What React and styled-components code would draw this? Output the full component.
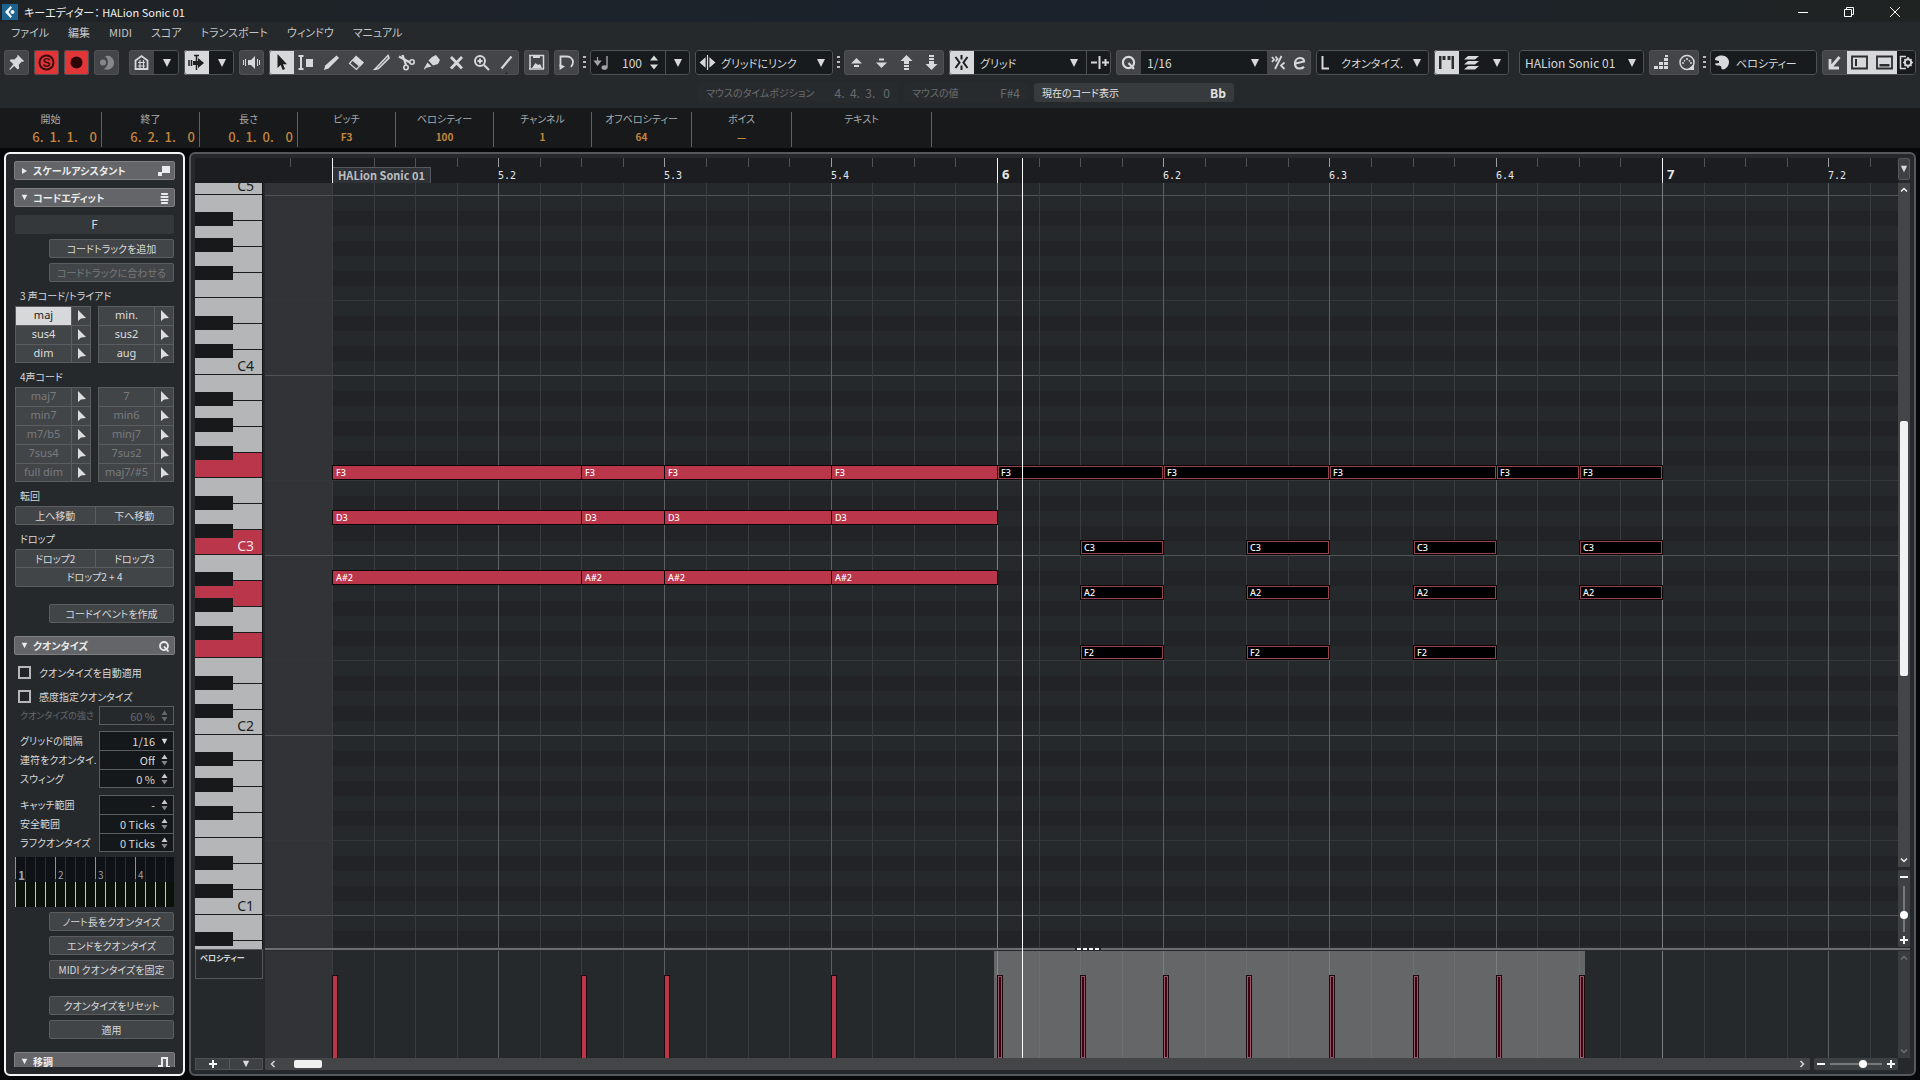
import React from 'react';
import styled, { createGlobalStyle, css } from 'styled-components';

const GlobalStyle = createGlobalStyle`
  * {
    box-sizing: border-box;
  }

  body {
    margin: 0;
    background: #060809;
    overflow: hidden;
  }

  body, button, input, select {
    font-family: 'Noto Sans CJK JP', 'Noto Sans', sans-serif;
    font-size: 12px;
    line-height: 16px;
    font-feature-settings: 'palt';
    color: #d6d8d9;
  }

  button, input, select {
    margin: 0;
    padding: 0;
    border: 0;
    border-radius: 0;
    background: none;
    appearance: none;
    outline: none;
  }

  svg {
    display: block;
    flex: none;
  }
`;

/* ---------- drawing helpers ---------- */

const icons = {
  pin: (
    <path
      fill="currentColor"
      d="M14 5l6 6-1 1-1.2-.4-3 3.2.4 3.4-1.4 1.4-3.7-3.7L6 20l-.8-.8 4.1-4.9-3.7-3.7L7 9.200l3.400.4 3.200-3L13 5.800z"
    />
  ),
  solo: (
    <>
      <circle cx="12.500" cy="12.500" r="7" fill="none" stroke="#3a0c0c" strokeWidth="2" />
      <text x="12.500" y="17" textAnchor="middle" fontFamily="Liberation Sans" fontSize="12" fontWeight="bold" fill="#3a0c0c">
        S
      </text>
    </>
  ),
  record: <circle cx="12.500" cy="12.500" r="6" fill="#2c0606" />,
  moon: (
    <>
      <path d="M11 6a7 7 0 1 1-1 13 8 8 0 0 0 1-13z" fill="#85878a" />
      <circle cx="9" cy="12.500" r="3" fill="#85878a" />
    </>
  ),
  house: (
    <>
      <path d="M6.500 19v-8.500L12.500 6l6 4.500V19z" fill="none" stroke="currentColor" strokeWidth="1.800" />
      <path d="M9 12.500h7M9 16h7M11 10v8M14.500 10v8" stroke="currentColor" strokeWidth="1.200" />
    </>
  ),
  scroll: (
    <>
      <path d="M12.500 5v15M10 5.500h5M5 10v6M7.500 10v6" stroke="#1c1e20" strokeWidth="1.500" />
      <path d="M9 11h5V8l6 5-6 5v-3H9z" fill="#1c1e20" />
    </>
  ),
  speaker: (
    <>
      <path d="M9 10h3l4-4v13l-4-4H9z" fill="currentColor" />
      <path d="M4.500 10v5M6.500 9v7M18.500 9v7M20.500 10v5" stroke="currentColor" />
    </>
  ),
  arrow: <path d="M8.500 4v14l3.200-3 2 5 2.300-1-2-4.800h4z" fill="#1c1e20" />,
  range: (
    <>
      <path d="M4.500 6h5M7 6v13M4.500 19h5" stroke="currentColor" strokeWidth="2" fill="none" />
      <path d="M12 9h7v8h-7z" fill="currentColor" />
    </>
  ),
  pencil: <path d="M17.500 5.500l2.500 2.500L9.500 18.500 5 20l1.200-4.500z" fill="currentColor" />,
  eraser: (
    <>
      <path d="M12 5.500l8 7-3.500 4-8-7z" fill="currentColor" />
      <path d="M8.500 10l7 6-3 3.500-7-6z" fill="none" stroke="currentColor" strokeWidth="1.200" />
    </>
  ),
  trim: <path d="M19 5.500L8.500 16.500 6 19l3.500-.5L20 8zM6 19.500l3-1" fill="none" stroke="currentColor" strokeWidth="1.600" />,
  scissors: (
    <>
      <path d="M5 6.500l11 6M8.500 5l3.500 10" stroke="currentColor" strokeWidth="2.200" />
      <circle cx="18" cy="12" r="2.200" fill="none" stroke="currentColor" strokeWidth="1.600" />
      <circle cx="12" cy="17.500" r="2.200" fill="none" stroke="currentColor" strokeWidth="1.600" />
    </>
  ),
  glue: (
    <>
      <path d="M13 7l4-2 4 5-2 4-5 1.500-4.500-5z" fill="currentColor" />
      <path d="M8.500 12.500l4 4-6 1.500-.5 2-1-1.500z" fill="currentColor" />
    </>
  ),
  cross: <path d="M7 7l11 11.500M18 7L7 18.500" stroke="currentColor" strokeWidth="2.800" />,
  zoom: (
    <>
      <circle cx="11" cy="11" r="5" fill="none" stroke="currentColor" strokeWidth="2" />
      <path d="M8.500 11h5M11 8.500v5M15 15l5 5" stroke="currentColor" strokeWidth="2" />
    </>
  ),
  line: (
    <>
      <path d="M17.500 6.500L7.500 18.500" stroke="currentColor" strokeWidth="2.200" />
      <path d="M10 25l2.500-3 2.500 3z" fill="#25292c" />
    </>
  ),
  feedback: (
    <>
      <path d="M5 5.500h15M6 5v14M19.500 5v14M5 19h15" stroke="currentColor" strokeWidth="1.500" />
      <path d="M9 6v2h7V6M8 18l3.500-5 2.500 2 2-1 2 4z" fill="currentColor" />
    </>
  ),
  loop: (
    <>
      <path
        d="M6.500 17V6.500H13a6 5.500 0 0 1 6 5.500c0 2-.8 3.500-2 5"
        fill="none"
        stroke="currentColor"
        strokeWidth="1.800"
      />
      <path d="M5.600 20v-6l5.400 2.500z" fill="currentColor" />
    </>
  ),
  velocity: (
    <>
      <path d="M7.500 7v8M4.500 11l3 4 3-4z" stroke="#a2a4a5" fill="#a2a4a5" strokeWidth="1.200" />
      <path d="M17 6v11" stroke="#a2a4a5" strokeWidth="1.400" />
      <ellipse cx="14.500" cy="17.500" rx="3" ry="2.300" fill="#a2a4a5" />
    </>
  ),
  spin: <path d="M1 10.500l4-5 4 5zM1 14.500l4 5 4-5z" fill="currentColor" />,
  nudge: <path d="M12.500 5v15M5.500 12.500L10 8.500v8zM19.500 12.500L15 8.500v8z" stroke="currentColor" fill="currentColor" strokeWidth="1.200" />,
  up: <path d="M7 13.500l5.500-5.500 5.500 5.500zM10 15h5v2h-5z" fill="currentColor" />,
  down: <path d="M7 12.500l5.500 5.500 5.500-5.500zM10 8.500h5v2h-5z" fill="currentColor" />,
  upOctave: <path d="M6.500 11l6-6 6 6H15v3h-5v-3zM10 15h5v2h-5zM10 18h5v2h-5z" fill="currentColor" />,
  downOctave: <path d="M6.500 14l6 6 6-6H15v-3h-5v3zM10 8h5v2h-5zM10 5h5v2h-5z" fill="currentColor" />,
  snap: (
    <>
      <path d="M12.500 5v4.500M12.500 15.500V20" stroke="#1c1e20" strokeWidth="2" />
      <path d="M6.500 7l4 5.500-4 5.500M18.500 7l-4 5.500 4 5.500" fill="none" stroke="#1c1e20" strokeWidth="2" />
    </>
  ),
  snapType: <path d="M4 12.500h6M12.500 6v13M15 12.500h7M18.500 9v7" stroke="currentColor" strokeWidth="2" />,
  quantize: (
    <>
      <circle cx="12.500" cy="12.500" r="5.600" fill="none" stroke="currentColor" strokeWidth="2.200" />
      <path d="M12.500 13l5.500 6" stroke="currentColor" strokeWidth="2.200" />
    </>
  ),
  iterative: (
    <path
      d="M14.500 6L8 19M5 7l2 2.500L5 12M8.500 6.500l2 2.500-2 2.500M17.500 12.500L14 15.500l3.500 3.500"
      fill="none"
      stroke="currentColor"
      strokeWidth="1.800"
    />
  ),
  editE: (
    <path
      d="M6.500 13.500L15 11.500c0-2-1.500-3.500-4-3.500s-5 2-5 5.500 2 5 4.500 5c2 0 3.500-.6 4.500-1.800"
      fill="none"
      stroke="currentColor"
      strokeWidth="2.200"
    />
  ),
  lengthL: <path d="M6.500 6v12.500H13" fill="none" stroke="currentColor" strokeWidth="2" />,
  parts: <path d="M5 6h2.500v13H5zM8.500 6h3v4h-3zM17.500 6H20v13h-2.500zM13.500 6h3v4h-3z" fill="#2a2c2e" />,
  layers: (
    <path
      d="M9 6h11l-4 3.500H5zM9 11h11l-4 3.500H5zM9 16h11l-4 3.500H5z"
      fill="currentColor"
    />
  ),
  steps: (
    <path
      d="M5 16h4v3H5zM10 16h4v3h-4zM15 16h4v3h-4zM10 12h4v3h-4zM15 12h4v3h-4zM15 8h4v3h-4zM16 5h3v2h-3z"
      fill="currentColor"
    />
  ),
  midi: (
    <>
      <circle cx="13" cy="12.500" r="7" fill="none" stroke="currentColor" strokeWidth="1.500" />
      <path
        d="M9 14v-2M10 10.500l1.200.6M13 8v2M16 10.500l-1.200.6M17 14v-2"
        stroke="currentColor"
        strokeWidth="1.500"
      />
      <path d="M13 20l7-6v6z" fill="currentColor" />
    </>
  ),
  palette: (
    <path
      d="M5 10c0-3 3-4.500 7-4.500s7 3 7 6.500-3 7.500-6 7.500c-2.500 0-1-3-2.500-3.500S5 16 5 13.500l4-.5v-2z"
      fill="currentColor"
    />
  ),
  corner: <path d="M17.500 7L9 17M8 9v9h9" fill="none" stroke="currentColor" strokeWidth="2.800" />,
  leftZone: (
    <>
      <path d="M5 6.500h15v12H5z" fill="none" stroke="#2a2c2e" strokeWidth="1.800" />
      <path d="M8 9h2v7H8z" fill="#2a2c2e" />
    </>
  ),
  lowerZone: (
    <>
      <path d="M5 6.500h15v12H5z" fill="none" stroke="#2a2c2e" strokeWidth="1.800" />
      <path d="M7.500 14h10v2.500h-10z" fill="#2a2c2e" />
    </>
  ),
  setup: (
    <>
      <path d="M9 6.500H3.500v12H9" fill="none" stroke="currentColor" strokeWidth="1.500" />
      <circle cx="11" cy="12.500" r="3.200" fill="none" stroke="currentColor" strokeWidth="2" />
      <path d="M11 7v2M11 16v2M6 12.500h2M14 12.500h2M7.500 9l1 1M14.500 9l-1 1M7.500 16l1-1M14.500 16l-1-1" stroke="currentColor" strokeWidth="1.500" />
    </>
  ),
};

const Icon = ({ name, width = 25, height = 25 }) => (
  <svg width={width} height={height} viewBox={`0 0 ${width} ${height}`} aria-hidden="true">
    {icons[name]}
  </svg>
);

const Caret = styled.svg.attrs({
  viewBox: '0 0 10 10',
  children: <path d="M1 1h8L5 9z" fill="currentColor" />,
})`
  width: ${(p) => p.$size || 9}px;
  height: ${(p) => p.$size || 9}px;
  pointer-events: none;
`;

/* ---------- window head ---------- */

const Window = styled.main`
  height: 100vh;
  display: flex;
  flex-direction: column;
`;

const TitleBar = styled.header`
  height: 22px;
  display: flex;
  align-items: center;
  padding: 2px 2px 0;
  gap: 6px;
  background: linear-gradient(90deg, #1f2326, #1b222b 45%, #1b222b 65%, #1f2322);
  color: #f0f1f1;

  h1 {
    flex: 1;
    margin: 0;
    font-size: 11px;
    font-weight: 400;
    white-space: pre;
  }
`;

const WindowButton = styled.button`
  width: 46px;
  height: 20px;
  margin-right: -6px;
  display: flex;
  align-items: center;
  justify-content: center;
  color: #fff;

  &:last-child {
    margin-right: 0;
  }
`;

const Head = styled.div`
  background: #25292c;
`;

const Menu = styled.nav`
  display: flex;
  gap: 19px;
  height: 22px;
  padding-left: 11px;

  button {
    height: 20px;
    font-size: 11px;
    color: #c3c5c6;
    white-space: nowrap;
  }
`;

const Toolbar = styled.div`
  display: flex;
  gap: 5px;
  padding: 6px 4px 8px;
`;

const Group = styled.div`
  display: flex;
  position: relative;
  height: 25px;
  flex: ${(p) => (p.$grow ? '1 1 0' : 'none')};
  ${(p) => p.$width && css`width: ${p.$width}px;`}
  margin-left: ${(p) => p.$space || 0}px;
  background: #181b1d;
  border-radius: 3px;
  overflow: hidden;

  &::after {
    content: '';
    position: absolute;
    inset: 0;
    border: 1px solid #4f5254;
    border-radius: 3px;
    pointer-events: none;
  }
`;

const tones = {
  raised: ['#434548', '#d6d8d9'],
  dark: ['transparent', '#d6d8d9'],
  lit: ['#d7d8d9', '#1c1e20'],
  red: ['#e23538', '#2c0606'],
};

const ToolButton = styled.button`
  width: ${(p) => p.$width || 25}px;
  height: 25px;
  flex: none;
  display: flex;
  align-items: center;
  justify-content: center;
  background: ${(p) => tones[p.$tone || 'raised'][0]};
  color: ${(p) => tones[p.$tone || 'raised'][1]};
  ${(p) => p.$divided && css`border-left: 1px solid #4f5254;`}
`;

const Grip = styled.span`
  width: 3px;
  height: 13px;
  margin: 6px -1px;
  background: repeating-linear-gradient(#b8babb 0 2px, transparent 2px 5px);
`;

const Picker = styled.label`
  flex: 1;
  min-width: 0;
  display: flex;
  align-items: center;
  padding-right: ${(p) => (p.$bare ? 0 : 7)}px;

  select {
    flex: 1;
    min-width: 0;
    height: 25px;
    padding-left: ${(p) => p.$indent || 6}px;
    font-size: ${(p) => (p.$latin ? 12 : 11)}px;
    white-space: nowrap;
  }
`;

const NumberInput = styled.input`
  flex: 1;
  width: 0;
  text-align: right;
  padding-right: 7px;
`;

const SpinButton = styled.button`
  width: 16px;
  flex: none;
`;

const StatusRow = styled.div`
  display: flex;
  gap: 6px;
  padding: 0 0 6px 698px;
`;

const Status = styled.div`
  width: ${(p) => p.$width}px;
  height: 19px;
  display: flex;
  justify-content: space-between;
  align-items: center;
  padding: 0 8px;
  border-radius: 3px;
  white-space: pre;
  font-size: 10px;
  background: ${(p) => (p.$active ? '#383b3e' : '#282b2e')};
  color: ${(p) => (p.$active ? '#e2e3e4' : '#696c6e')};

  b {
    font-size: 12px;
    font-weight: ${(p) => (p.$active ? 700 : 400)};
  }
`;

const InfoLine = styled.dl`
  height: 40px;
  margin: 0;
  display: flex;
  background: #17191a;
`;

const InfoCell = styled.div`
  width: ${(p) => p.$width}px;
  height: 35px;
  margin-top: 4px;
  border-right: 1px solid #5f6264;
  text-align: center;

  dt {
    font-size: 10px;
    line-height: 14px;
    color: #a9abac;
  }

  dd {
    margin: 3px 0 0;
    padding-right: ${(p) => (p.$time ? 4 : 0)}px;
    text-align: ${(p) => (p.$time ? 'right' : 'center')};
    white-space: pre;
    font-size: ${(p) => (p.$time ? 13 : 10)}px;
    font-weight: ${(p) => (p.$time ? 500 : 700)};
    color: #c5853a;
  }
`;

/* ---------- inspector ---------- */

const Body = styled.div`
  flex: 1;
  min-height: 0;
  display: flex;
  gap: 4px;
  padding: 4px;
`;

const Inspector = styled.aside`
  width: 181px;
  flex: none;
  display: flex;
  flex-direction: column;
  border: 2px solid #f4f5f5;
  border-radius: 6px;
  padding: 7px 8px;
  background: #25292c;
`;

const InspectorScroll = styled.div`
  flex: 1;
  min-height: 0;
  overflow: hidden;
`;

const SectionHead = styled.button`
  width: 100%;
  height: 19px;
  margin-bottom: 8px;
  display: flex;
  align-items: center;
  gap: 5px;
  padding: 0 4px 0 6px;
  border: 1px solid #7d7f81;
  border-radius: 2px;
  background: #636568;
  color: #eaebeb;
  font-size: 10px;
  font-weight: 700;
  text-align: left;

  span {
    flex: 1;
  }
`;

const Stack = styled.div`
  display: flex;
  flex-direction: column;
  align-items: ${(p) => (p.$end ? 'flex-end' : 'stretch')};
  gap: 5px;
  padding: 0 1px;
  margin-top: ${(p) => p.$before || 0}px;
  margin-bottom: ${(p) => p.$after || 0}px;
`;

const Readout = styled.output`
  height: 19px;
  border-radius: 2px;
  background: #35383b;
  text-align: center;
  line-height: 18px;
`;

const PanelButton = styled.button`
  width: 125px;
  height: 19px;
  border: 1px solid #5b5e60;
  border-radius: 2px;
  background: #424548;
  font-size: 10px;
  line-height: 16px;
  white-space: nowrap;

  &:disabled {
    color: #77797b;
  }
`;

const Caption = styled.h3`
  margin: 0;
  padding: ${(p) => p.$top || 4}px 0 2px 6px;
  font-size: 10px;
  line-height: 16px;
  font-weight: 400;
`;

const ChordGrid = styled.div`
  display: grid;
  grid-template-columns: 1fr 1fr;
  column-gap: 7px;
  padding: 0 1px;
`;

const Chord = styled.div`
  display: flex;
  height: 19px;
  border: 1px solid #5b5e60;
  border-bottom-width: ${(p) => (p.$last ? 1 : 0)}px;
  background: #424548;

  button:first-child {
    flex: 1;
    padding-bottom: 2px;
    border-right: 1px solid #5b5e60;
    font-family: 'Noto Sans', sans-serif;
    font-size: 11px;
    background: ${(p) => (p.$on ? '#d7d8d9' : 'transparent')};
    color: ${(p) => (p.$on ? '#232527' : p.$off ? '#797b7d' : '#dcdddd')};
  }

  button:last-child {
    width: 18px;
    display: flex;
    align-items: center;
    justify-content: center;
  }
`;

const ButtonGrid = styled.div`
  display: grid;
  grid-template-columns: 1fr 1fr;
  margin: 0 1px;
  border: 1px solid #5b5e60;
  border-radius: 2px;
  background: #424548;

  button {
    height: 17px;
    font-size: 10px;
    line-height: 16px;
  }

  button:nth-child(2) {
    border-left: 1px solid #5b5e60;
  }

  button:nth-child(3) {
    grid-column: 1 / 3;
    height: 19px;
    border-top: 1px solid #5b5e60;
  }
`;

const Tick = styled.label`
  display: flex;
  align-items: center;
  gap: 8px;
  height: 19px;
  padding-left: 4px;
  font-size: 10px;
  white-space: nowrap;

  & + & {
    margin-top: 5px;
  }

  input {
    width: 13px;
    height: 13px;
    border: 2px solid #b5b7b8;
    background: #202426;
  }
`;

const Fields = styled.div`
  padding-right: 1px;
  margin-bottom: ${(p) => p.$after || 7}px;
`;

const Field = styled.label`
  display: flex;
  height: 19px;
  align-items: center;
  justify-content: space-between;
  padding-left: 6px;
  white-space: nowrap;
  font-size: ${(p) => (p.$off ? 9 : 10)}px;
  color: ${(p) => (p.$off ? '#66696b' : '#d6d8d9')};
`;

const FieldBox = styled.span`
  width: 75px;
  height: 19px;
  flex: none;
  display: flex;
  align-items: center;
  gap: 6px;
  padding-right: 5px;
  border: 1px solid #5b5e60;
  border-bottom-width: ${(p) => (p.$last ? 1 : 0)}px;
  background: ${(p) => (p.$off ? '#25292c' : '#15181a')};

  input, select {
    flex: 1;
    width: 0;
    height: 17px;
    font-size: 11px;
    text-align: right;
    text-align-last: right;
    color: inherit;
  }
`;

const QuantizeView = styled.div`
  display: grid;
  grid-template-columns: repeat(4, 40px);
  height: 50px;
  margin: 5px 1px;
  overflow: hidden;
  background: linear-gradient(#0e1116 50%, #0b120c 50%);
`;

const QuantizeBeat = styled.div`
  display: flex;
  height: 50px;
  background:
    repeating-linear-gradient(90deg, #94e889 0 1px, transparent 1px 10px) 0 25px / 100% 25px no-repeat,
    linear-gradient(90deg, #8d9096 1px, transparent 1px) 0 0 / 40px 22px no-repeat,
    repeating-linear-gradient(90deg, #2d3035 0 1px, transparent 1px 10px);
  padding: 10px 0 0 3px;
  font-size: ${(p) => (p.$first ? 12 : 10)}px;
  font-weight: ${(p) => (p.$first ? 700 : 400)};
  line-height: 16px;
  color: #9fa2a6;
`;

/* ---------- editor ---------- */

const SIXTEENTH = 41.5625;
const ORIGIN = 67;
const ROW = 15;
const timeX = (t) => ORIGIN + Math.ceil(t * SIXTEENTH - 0.5);

const Editor = styled.section`
  flex: 1;
  min-width: 0;
  display: flex;
  border: 2px solid #56595b;
  border-radius: 6px;
  padding: 4px;
  background: #25292c;
`;

const KeyColumn = styled.div`
  width: 70px;
  flex: none;
  display: flex;
  flex-direction: column;
  padding: 25px 2px 0 0;
  background: linear-gradient(#1b1d20 25px, transparent 25px);
`;

const Keyboard = styled.div`
  flex: 1;
  min-height: 0;
  overflow: hidden;
  border-right: 1px solid #101213;
`;

const Octave = styled.div`
  position: relative;
  height: 180px;
`;

const WhiteKey = styled.div`
  height: ${(p) => p.$height}px;
  display: flex;
  align-items: flex-end;
  justify-content: flex-end;
  overflow: hidden;
  padding-right: 8px;
  border-bottom: 1px solid #1b1b1d;
  background: ${(p) => (p.$down ? '#ba364b' : '#b4b6b8')};
  color: ${(p) => (p.$down ? '#f2dfe2' : '#1b1d1f')};
  font-family: 'Noto Sans', sans-serif;
  font-size: 14px;
  line-height: 16px;
`;

const BlackKey = styled.div`
  position: absolute;
  left: 0;
  top: ${(p) => p.$top}px;
  width: 38px;
  height: 14px;
  background: #17191a;
`;

const LaneName = styled.div`
  height: 30px;
  border: 1px solid #56595b;
  padding: 1px 4px;
  font-size: 8px;
  line-height: 13px;
  font-weight: 700;
`;

const LaneSpace = styled.div`
  height: 79px;
`;

const LaneButtons = styled.div`
  display: grid;
  grid-template-columns: 1fr 1fr;
  height: 12px;
  border: 1px solid #4f5254;
  background: #3e4143;

  button {
    display: flex;
    align-items: center;
    justify-content: center;
  }

  button + button {
    border-left: 1px solid #56595b;
  }
`;

const Canvas = styled.div`
  position: relative;
  flex: 1;
  min-width: 0;
  display: flex;
  flex-direction: column;
`;

const Ruler = styled.div`
  position: relative;
  height: 25px;
  flex: none;
  overflow: hidden;
  background: #1b1d20;
`;

const RulerTick = styled.i`
  position: absolute;
  top: 0;
  width: 1px;
  height: ${(p) => (p.$kind === 'bar' ? 25 : 9)}px;
  background: ${(p) => ({ bar: '#f5f5f5', beat: '#9b9da0', sub: '#4f5255' })[p.$kind]};
`;

const RulerText = styled.span`
  position: absolute;
  top: ${(p) => (p.$bar ? 8 : 10)}px;
  font-family: ${(p) => (p.$bar ? "'Noto Sans', sans-serif" : "'DejaVu Sans Mono', monospace")};
  font-size: ${(p) => (p.$bar ? 13 : 10)}px;
  font-weight: ${(p) => (p.$bar ? 700 : 400)};
  font-feature-settings: normal;
  color: #e6e7e8;
`;

const PartName = styled.span`
  position: absolute;
  top: 9px;
  left: ${ORIGIN + 1}px;
  height: 16px;
  padding: 0 5px;
  border: 1px solid #56595b;
  border-width: 1px 1px 0 0;
  background: #2f3236;
  color: #bcbec0;
  font-size: 11px;
  font-weight: 700;
  line-height: 14px;
  white-space: nowrap;
`;

const NoteArea = styled.div`
  position: relative;
  flex: 1;
  min-height: 0;
  overflow: hidden;
`;

const Row = styled.div`
  height: ${(p) => p.$height || ROW}px;
  background: linear-gradient(90deg, #323336 ${ORIGIN}px, ${(p) => (p.$black ? '#212326' : '#25292c')} ${ORIGIN}px);
  border-bottom: ${(p) => (p.$line ? 1 : 0)}px solid ${(p) => (p.$line === 'octave' ? '#505355' : '#34373a')};
`;

const GridLine = styled.i`
  position: absolute;
  top: 0;
  bottom: 0;
  width: 1px;
  background: ${(p) => ({ bar: '#7b7e80', beat: '#5c5f61', sub: '#3a3d40' })[p.$kind]};
`;

const Note = styled.div`
  position: absolute;
  height: 15px;
  border: 1px solid #0c0506;
  box-shadow: ${(p) => (p.$selected ? 'inset 0 0 0 1px #98444f' : 'none')};
  background: ${(p) => (p.$selected ? '#000' : '#ba364b')};
  color: #fff;
  padding-left: 3px;
  font-family: 'Noto Sans', sans-serif;
  font-size: 9px;
  font-weight: 500;
  line-height: 14px;
`;

const Splitter = styled.div`
  height: 3px;
  flex: none;
  display: flex;
  justify-content: center;
  padding-left: 12px;
  border-bottom: 1px solid #25292c;
  background: #6b6e70;
`;

const SplitHandle = styled.span`
  width: 26px;
  height: 2px;
  background: repeating-linear-gradient(90deg, #25292c 0 2px, #f4f4f4 2px 6px);
`;

const VelocityLane = styled.div`
  position: relative;
  height: 107px;
  flex: none;
  overflow: hidden;
  background: linear-gradient(90deg, #323336 ${ORIGIN}px, #25292c ${ORIGIN}px);
`;

const Selection = styled.div`
  position: absolute;
  top: 0;
  bottom: 0;
  background: rgba(150, 150, 149, 0.56);
`;

const VelocityBar = styled.div`
  position: absolute;
  top: 24px;
  bottom: 0;
  width: 6px;
  border: 1px solid #1c0a0e;
  border-bottom: 0;
  background: ${(p) => (p.$selected ? '#3c0410' : '#ba364b')};
  box-shadow: ${(p) => (p.$selected ? 'inset 0 0 0 1px #95566a' : 'none')};
`;

const Playhead = styled.i`
  position: absolute;
  top: 0;
  bottom: 12px;
  width: 1px;
  background: #fff;
`;

const BottomBar = styled.div`
  height: 12px;
  flex: none;
  display: flex;
  gap: 4px;
`;

const HorizontalScroll = styled.div`
  flex: 1;
  display: flex;
  align-items: center;
  justify-content: space-between;
  padding: 0 4px;
  background: #434547;

  span {
    width: 28px;
    height: 8px;
    margin: 0 auto 0 17px;
    border-radius: 2px;
    background: #f1f2f2;
  }
`;

const ZoomBox = styled.div`
  display: flex;
  flex-direction: ${(p) => (p.$vertical ? 'column' : 'row')};
  align-items: center;
  justify-content: space-between;
  width: ${(p) => (p.$vertical ? 12 : 84)}px;
  height: ${(p) => (p.$vertical ? 77 : 12)}px;
  margin-top: ${(p) => (p.$vertical ? 3 : 0)}px;
  padding: ${(p) => (p.$vertical ? '3px 0' : '0 3px')};
  border-radius: 2px;
  background: #3e4143;
`;

const ZoomSlider = styled.input.attrs({ type: 'range' })`
  width: ${(p) => (p.$vertical ? 8 : 52)}px;
  height: ${(p) => (p.$vertical ? 46 : 8)}px;
  ${(p) => p.$vertical && css`writing-mode: vertical-lr;`}
  background: linear-gradient(#77797b, #77797b) center / ${(p) => (p.$vertical ? '2px 100%' : '100% 2px')} no-repeat;

  &::-webkit-slider-thumb {
    appearance: none;
    width: 8px;
    height: 8px;
    border-radius: 50%;
    background: #fff;
  }
`;

const SideBar = styled.div`
  width: 12px;
  flex: none;
  display: flex;
  flex-direction: column;
`;

const RulerMenu = styled.button`
  height: 22px;
  margin-bottom: 3px;
  display: flex;
  align-items: center;
  justify-content: center;
  border: 1px solid #56595b;
  border-radius: 2px;
  background: #3e4143;
`;

const VerticalScroll = styled.div`
  flex: ${(p) => (p.$small ? 'none' : 1)};
  height: ${(p) => (p.$small ? '107px' : 'auto')};
  margin-bottom: ${(p) => (p.$small ? 12 : 0)}px;
  display: grid;
  grid-template-rows: 14px 1fr 14px;
  place-items: center;
  background: ${(p) => (p.$small ? '#3a3d3f' : '#434547')};
  color: ${(p) => (p.$small ? '#6d7072' : '#f1f2f2')};
`;

const VerticalTrack = styled.div`
  width: 8px;
  height: 100%;
  display: grid;
  grid-template-rows: 224fr 255fr 177fr;

  span {
    grid-row: 2;
    border-radius: 2px;
    background: #f1f2f2;
  }
`;

const SideSplit = styled.div`
  height: 3px;
  margin-top: 1px;
  border-bottom: 1px solid #25292c;
  background: #6b6e70;
`;

/* ---------- data ---------- */

const menuItems = ['ファイル', '編集', 'MIDI', 'スコア', 'トランスポート', 'ウィンドウ', 'マニュアル'];

const info = [
  { label: '開始', value: '6.  1.  1.    0', width: 102, time: true },
  { label: '終了', value: '6.  2.  1.    0', width: 98, time: true },
  { label: '長さ', value: '0.  1.  0.    0', width: 98, time: true },
  { label: 'ピッチ', value: 'F3', width: 98 },
  { label: 'ベロシティー', value: '100', width: 98 },
  { label: 'チャンネル', value: '1', width: 98 },
  { label: 'オフベロシティー', value: '64', width: 100 },
  { label: 'ボイス', value: '—', width: 100 },
  { label: 'テキスト', value: '', width: 140 },
];

const triads = ['maj', 'min.', 'sus4', 'sus2', 'dim', 'aug'];
const sevenths = ['maj7', '7', 'min7', 'min6', 'm7/b5', 'minj7', '7sus4', '7sus2', 'full dim', 'maj7/#5'];

const whiteKeys = [['B', 26], ['A', 26], ['G', 26], ['F', 25], ['E', 26], ['D', 26], ['C', 25]];
const blackTops = [17, 43, 71, 121, 149];
const pressed = ['F3', 'C3', 'A2', 'F2'];
const names = ['C', 'B', 'A#', 'A', 'G#', 'G', 'F#', 'F', 'E', 'D#', 'D', 'C#'];

// pitch, start and end, counted in sixteenths from bar 5
const notes = [];
['F3', 'D3', 'A#2'].forEach((pitch) => {
  [[0, 6], [6, 8], [8, 12], [12, 16]].forEach(([from, to]) => notes.push({ pitch, from, to }));
});
[[16, 20], [20, 24], [24, 28], [28, 30], [30, 32]].forEach(([from, to]) =>
  notes.push({ pitch: 'F3', from, to, selected: true }),
);
[18, 22, 26, 30].forEach((from) => {
  ['C3', 'A2', 'F2'].forEach((pitch) => {
    if (pitch === 'F2' && from === 30) return;
    notes.push({ pitch, from, to: from + 2, selected: true });
  });
});

const velocities = [0, 6, 8, 12, 16, 18, 20, 22, 24, 26, 28, 30];

const noteTop = (pitch) => {
  const name = pitch.slice(0, -1);
  const octave = Number(pitch.slice(-1));
  const index = names.indexOf(name);
  const steps = (5 - octave) * 12 - (index === 0 ? 0 : 12 - index);
  return steps * ROW - 3;
};

const kindOf = (t) => (t % 16 === 0 ? 'bar' : t % 4 === 0 ? 'beat' : 'sub');
const columns = Array.from({ length: 38 }, (_, i) => i);

/* ---------- parts ---------- */

const Single = ({ name, tone, label, space }) => (
  <Group $space={space}>
    <ToolButton $tone={tone} aria-label={label}>
      <Icon name={name} />
    </ToolButton>
  </Group>
);

const Drop = ({ label, value, indent, bare, latin }) => (
  <Picker $indent={indent} $bare={bare} $latin={latin}>
    <select aria-label={label}>
      <option>{value}</option>
    </select>
    {!bare && <Caret $size={10} />}
  </Picker>
);

const MiniPlus = ({ minus }) => (
  <svg width="8" height="8" viewBox="0 0 8 8">
    <path d={minus ? 'M0 4h8' : 'M0 4h8M4 0v8'} stroke="#f4f5f5" strokeWidth="2" />
  </svg>
);

const Chevron = ({ d }) => (
  <svg width="8" height="8" viewBox="0 0 8 8">
    <path d={d} fill="none" stroke="currentColor" strokeWidth="1.500" />
  </svg>
);

const chevrons = {
  up: 'M1 5.500L4 2.500l3 3',
  down: 'M1 2.500l3 3 3-3',
  left: 'M5.500 1l-3 3 3 3',
  right: 'M2.500 1l3 3-3 3',
};

const Chords = ({ items, off, active }) => (
  <ChordGrid>
    {items.map((item, i) => (
      <Chord key={item} $off={off} $on={item === active} $last={i >= items.length - 2}>
        <button disabled={off}>{item}</button>
        <button aria-label={`${item} ▶`}>
          <svg width="9" height="12" viewBox="0 0 9 12">
            <path d="M1 0v11l3-2.500L9 8z" fill="#dcdddd" />
          </svg>
        </button>
      </Chord>
    ))}
  </ChordGrid>
);

const Spin = ({ off }) => (
  <svg width="7" height="12" viewBox="0 0 7 12">
    <path d="M0.500 5l3-4.500 3 4.500z" fill={off ? '#66696b' : '#c8cacb'} />
    <path d="M0.500 7l3 4.500 3-4.500z" fill={off ? '#66696b' : '#85878a'} />
  </svg>
);

const Value = ({ label, value, off, last, select }) => (
  <Field $off={off}>
    {label}
    <FieldBox $off={off} $last={last}>
      {select ? (
        <select>
          <option>{value}</option>
        </select>
      ) : (
        <input defaultValue={value} disabled={off} />
      )}
      {select ? <Caret $size={7} /> : <Spin off={off} />}
    </FieldBox>
  </Field>
);

const TopTools = () => (
  <Toolbar>
    <Single name="pin" label="ピン" />
    <Single name="solo" tone="red" label="ソロ" />
    <Single name="record" tone="red" label="録音" />
    <Single name="moon" label="音響フィードバック" />
    <Group $space={5}>
      <ToolButton aria-label="表示"><Icon name="house" /></ToolButton>
      <ToolButton $tone="dark" aria-label="表示メニュー"><Caret $size={10} /></ToolButton>
    </Group>
    <Group>
      <ToolButton $tone="lit" aria-label="オートスクロール"><Icon name="scroll" /></ToolButton>
      <ToolButton $tone="dark" aria-label="スクロールメニュー"><Caret $size={10} /></ToolButton>
    </Group>
    <Single name="speaker" label="試聴" />
    <Group>
      {['arrow', 'range', 'pencil', 'eraser', 'trim', 'scissors', 'glue', 'cross', 'zoom', 'line'].map((name) => (
        <ToolButton key={name} $tone={name === 'arrow' ? 'lit' : 'raised'} aria-label={name}>
          <Icon name={name} />
        </ToolButton>
      ))}
    </Group>
    <Single name="feedback" label="コントローラー" />
    <Single name="loop" label="ループ" />
    <Grip />
    <Group $width={100}>
      <Icon name="velocity" />
      <NumberInput aria-label="挿入ベロシティー" defaultValue="100" />
      <SpinButton aria-label="増減"><Icon name="spin" width={10} /></SpinButton>
      <ToolButton $tone="dark" $divided aria-label="ベロシティーメニュー"><Caret $size={10} /></ToolButton>
    </Group>
    <Group $width={138}>
      <Icon name="nudge" />
      <Drop label="ナッジ" value="グリッドにリンク" indent={1} />
    </Group>
    <Grip />
    <Group>
      {['up', 'down', 'upOctave', 'downOctave'].map((name) => (
        <ToolButton key={name} aria-label={name}><Icon name={name} /></ToolButton>
      ))}
    </Group>
    <Group $width={162}>
      <ToolButton $tone="lit" aria-label="スナップ"><Icon name="snap" /></ToolButton>
      <Drop label="スナップタイプ" value="グリッド" />
      <ToolButton $tone="dark" $divided aria-label="グリッドタイプ"><Icon name="snapType" /></ToolButton>
    </Group>
    <Group $width={195}>
      <ToolButton aria-label="クオンタイズ"><Icon name="quantize" /></ToolButton>
      <Drop label="クオンタイズ値" value="1/16" latin />
      <ToolButton $width={22} aria-label="反復クオンタイズ"><Icon name="iterative" width={22} /></ToolButton>
      <ToolButton $width={22} aria-label="クオンタイズパネル"><Icon name="editE" width={22} /></ToolButton>
    </Group>
    <Group $width={113}>
      <Icon name="lengthL" width={20} />
      <Drop label="長さ" value="クオンタイズ." indent={5} />
    </Group>
    <Group>
      <ToolButton $tone="lit" aria-label="パート"><Icon name="parts" /></ToolButton>
      <ToolButton $tone="dark" aria-label="レイヤー"><Icon name="layers" /></ToolButton>
      <ToolButton $tone="dark" aria-label="レイヤーメニュー"><Caret $size={10} /></ToolButton>
    </Group>
    <Group $width={125} $space={5}>
      <Drop label="パート" value="HALion Sonic 01" latin />
    </Group>
    <Group>
      <ToolButton aria-label="ステップ入力"><Icon name="steps" /></ToolButton>
      <ToolButton aria-label="MIDI"><Icon name="midi" /></ToolButton>
    </Group>
    <Grip />
    <Group $grow>
      <Icon name="palette" />
      <Drop label="色" value="ベロシティー" indent={1} bare />
    </Group>
    <Group>
      <ToolButton aria-label="下ゾーン"><Icon name="corner" /></ToolButton>
      <ToolButton $tone="lit" aria-label="左ゾーン"><Icon name="leftZone" /></ToolButton>
      <ToolButton $tone="lit" aria-label="下の段"><Icon name="lowerZone" /></ToolButton>
      <ToolButton $tone="dark" $width={19} aria-label="設定"><Icon name="setup" width={19} /></ToolButton>
    </Group>
  </Toolbar>
);

const LeftPanel = () => (
  <Inspector>
    <InspectorScroll>
      <SectionHead>
        <svg width="7" height="8" viewBox="0 0 7 8"><path d="M1 1l5 3-5 3z" fill="currentColor" /></svg>
        <span>スケールアシスタント</span>
        <svg width="12" height="12" viewBox="0 0 12 12"><path d="M4 1h8v7H4zM0 7h4v4H0z" fill="currentColor" /></svg>
      </SectionHead>
      <SectionHead>
        <Caret $size={7} />
        <span>コードエディット</span>
        <svg width="12" height="12" viewBox="0 0 12 12">
          <path d="M4 2h5M3.500 5h6M3.500 8h6M4 11h5" stroke="currentColor" strokeWidth="2.200" strokeLinecap="round" />
        </svg>
      </SectionHead>
      <Stack $after={5}>
        <Readout>F</Readout>
      </Stack>
      <Stack $end $after={2}>
        <PanelButton>コードトラックを追加</PanelButton>
        <PanelButton disabled>コードトラックに合わせる</PanelButton>
      </Stack>
      <Caption>3 声コード/トライアド</Caption>
      <Chords items={triads} active="maj" />
      <Caption $top={6}>4声コード</Caption>
      <Chords items={sevenths} off />
      <Caption $top={6}>転回</Caption>
      <ButtonGrid>
        <button>上へ移動</button>
        <button>下へ移動</button>
      </ButtonGrid>
      <Caption $top={6}>ドロップ</Caption>
      <ButtonGrid>
        <button>ドロップ2</button>
        <button>ドロップ3</button>
        <button>ドロップ2 + 4</button>
      </ButtonGrid>
      <Stack $end $before={17} $after={13}>
        <PanelButton>コードイベントを作成</PanelButton>
      </Stack>
      <SectionHead>
        <Caret $size={7} />
        <span>クオンタイズ</span>
        <svg width="12" height="12" viewBox="0 0 12 12">
          <path d="M10 6a4 4 0 1 1-8 0 4 4 0 0 1 8 0zM6 6.500l4.500 5" fill="none" stroke="currentColor" strokeWidth="1.800" />
        </svg>
      </SectionHead>
      <Tick><input type="checkbox" />クオンタイズを自動適用</Tick>
      <Tick><input type="checkbox" />感度指定クオンタイズ</Tick>
      <Fields $after={6}>
        <Value label="クオンタイズの強さ" value="60 %" off last />
      </Fields>
      <Fields>
        <Value label="グリッドの間隔" value="1/16" select />
        <Value label="連符をクオンタイ." value="Off" />
        <Value label="スウィング" value="0 %" last />
      </Fields>
      <Fields $after={5}>
        <Value label="キャッチ範囲" value="-" />
        <Value label="安全範囲" value="0 Ticks" />
        <Value label="ラフクオンタイズ" value="0 Ticks" last />
      </Fields>
      <QuantizeView>
        {[1, 2, 3, 4].map((n) => (
          <QuantizeBeat key={n} $first={n === 1}>{n}</QuantizeBeat>
        ))}
      </QuantizeView>
      <Stack $end $after={17}>
        <PanelButton>ノート長をクオンタイズ</PanelButton>
        <PanelButton>エンドをクオンタイズ</PanelButton>
        <PanelButton>MIDI クオンタイズを固定</PanelButton>
      </Stack>
      <Stack $end $after={13}>
        <PanelButton>クオンタイズをリセット</PanelButton>
        <PanelButton>適用</PanelButton>
      </Stack>
      <SectionHead>
        <Caret $size={7} />
        <span>移調</span>
        <svg width="12" height="12" viewBox="0 0 12 12">
          <path d="M0 10h4V2h5v9h3" fill="none" stroke="currentColor" strokeWidth="2" />
        </svg>
      </SectionHead>
    </InspectorScroll>
  </Inspector>
);

const Piano = () => (
  <Keyboard>
    <WhiteKey $height={12}>C5</WhiteKey>
    {[4, 3, 2, 1, 0].map((octave) => (
      <Octave key={octave}>
        {whiteKeys.map(([name, height]) => (
          <WhiteKey key={name} $height={height} $down={pressed.includes(name + octave)}>
            {name === 'C' && octave > 0 ? `C${octave}` : ''}
          </WhiteKey>
        ))}
        {blackTops.map((top) => (
          <BlackKey key={top} $top={top} />
        ))}
      </Octave>
    ))}
  </Keyboard>
);

const GridLines = () =>
  columns.map((t) => <GridLine key={t} $kind={t === 0 ? 'sub' : kindOf(t)} style={{ left: timeX(t) }} />);

const NoteCanvas = () => (
  <Canvas>
    <Ruler>
      {[-1, ...columns].map((t) => (
        <RulerTick key={t} $kind={t < 0 ? 'sub' : kindOf(t)} style={{ left: timeX(t) }} />
      ))}
      {columns
        .filter((t) => t % 4 === 0 && t > 0)
        .map((t) => {
          const bar = 5 + Math.floor(t / 16);
          const beat = (t % 16) / 4 + 1;
          return (
            <RulerText key={t} $bar={beat === 1} style={{ left: timeX(t) + (beat === 1 ? 5 : 0) }}>
              {beat === 1 ? bar : `${bar}.${beat}`}
            </RulerText>
          );
        })}
      <PartName>HALion Sonic 01</PartName>
    </Ruler>
    <NoteArea>
      <Row $height={13} $line="octave" />
      {[4, 3, 2, 1, 0].map((octave) =>
        [...names.slice(1), 'C'].map((name) => (
          <Row
            key={name + octave}
            $black={name.includes('#')}
            $line={name === 'C' ? 'octave' : name === 'F' ? 'half' : undefined}
          />
        )),
      )}
      <GridLines />
      {notes.map((n) => (
        <Note
          key={n.pitch + n.from}
          $selected={n.selected}
          style={{ left: timeX(n.from), top: noteTop(n.pitch), width: timeX(n.to) - timeX(n.from) + 1 }}
        >
          {n.pitch}
        </Note>
      ))}
    </NoteArea>
    <Splitter>
      <SplitHandle />
    </Splitter>
    <VelocityLane>
      <GridLines />
      <Selection style={{ left: timeX(16) - 3, width: timeX(30) - timeX(16) + 9 }} />
      {velocities.map((t) => (
        <VelocityBar key={t} $selected={t >= 16} style={{ left: timeX(t) }} />
      ))}
    </VelocityLane>
    <BottomBar>
      <HorizontalScroll>
        <Chevron d={chevrons.left} />
        <span />
        <Chevron d={chevrons.right} />
      </HorizontalScroll>
      <ZoomBox>
        <MiniPlus minus />
        <ZoomSlider aria-label="横ズーム" defaultValue={66} />
        <MiniPlus />
      </ZoomBox>
    </BottomBar>
    <Playhead style={{ left: timeX(16) + 25 }} />
  </Canvas>
);

const App = () => (
  <>
    <GlobalStyle />
    <Window>
      <TitleBar>
        <svg width="16" height="16" viewBox="0 0 16 16">
          <path d="M0 0h16v16H0z" fill="#1d6390" />
          <path d="M8.500 2L3 8l5.500 6 1.500-1.500L6.500 8 10 3.500z" fill="#f2f6f8" />
          <circle cx="10.500" cy="8" r="2" fill="#f2f6f8" />
        </svg>
        <h1>キーエディター： HALion Sonic 01</h1>
        <WindowButton aria-label="最小化">
          <svg width="10" height="10" viewBox="0 0 10 10"><path d="M0 5.500h10" stroke="currentColor" /></svg>
        </WindowButton>
        <WindowButton aria-label="元に戻す">
          <svg width="10" height="10" viewBox="0 0 10 10">
            <path d="M.5 2.500h7v7h-7zM2.500 2.500v-2h7v7h-2" fill="none" stroke="currentColor" />
          </svg>
        </WindowButton>
        <WindowButton aria-label="閉じる">
          <svg width="10" height="10" viewBox="0 0 10 10"><path d="M0 0l10 10M10 0L0 10" stroke="currentColor" /></svg>
        </WindowButton>
      </TitleBar>
      <Head>
        <Menu>
          {menuItems.map((item) => (
            <button key={item}>{item}</button>
          ))}
        </Menu>
        <TopTools />
        <StatusRow>
          <Status $width={200}>マウスのタイムポジション<b>4.  4.  3.   0</b></Status>
          <Status $width={124}>マウスの値<b>F#4</b></Status>
          <Status $width={200} $active>現在のコード表示<b>Bb</b></Status>
        </StatusRow>
      </Head>
      <InfoLine>
        {info.map((cell) => (
          <InfoCell key={cell.label} $width={cell.width} $time={cell.time}>
            <dt>{cell.label}</dt>
            <dd>{cell.value}</dd>
          </InfoCell>
        ))}
      </InfoLine>
      <Body>
        <LeftPanel />
        <Editor>
          <KeyColumn>
            <Piano />
            <LaneName>ベロシティー</LaneName>
            <LaneSpace />
            <LaneButtons>
              <button aria-label="レーンを追加"><MiniPlus /></button>
              <button aria-label="レーンメニュー"><Caret $size={8} /></button>
            </LaneButtons>
          </KeyColumn>
          <NoteCanvas />
          <SideBar>
            <RulerMenu aria-label="ルーラー"><Caret $size={8} /></RulerMenu>
            <VerticalScroll>
              <Chevron d={chevrons.up} />
              <VerticalTrack><span /></VerticalTrack>
              <Chevron d={chevrons.down} />
            </VerticalScroll>
            <ZoomBox $vertical>
              <MiniPlus minus />
              <ZoomSlider $vertical aria-label="縦ズーム" defaultValue={66} />
              <MiniPlus />
            </ZoomBox>
            <SideSplit />
            <VerticalScroll $small>
              <Chevron d={chevrons.up} />
              <i />
              <Chevron d={chevrons.down} />
            </VerticalScroll>
          </SideBar>
        </Editor>
      </Body>
    </Window>
  </>
);

export default App;
